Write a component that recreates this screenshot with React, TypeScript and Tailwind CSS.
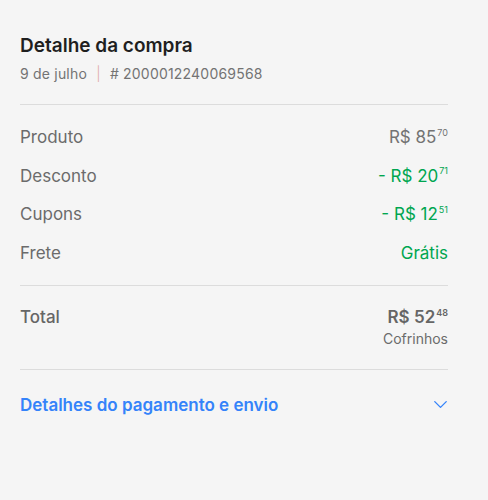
import { ChevronDown } from 'lucide-react';

type Row = { label: string; value: string; cents: string; green?: boolean; plain?: boolean };

const rows: Row[] = [
    { label: 'Produto', value: 'R$ 85', cents: '70' },
    { label: 'Desconto', value: '- R$ 20', cents: '71', green: true },
    { label: 'Cupons', value: '- R$ 12', cents: '51', green: true },
    { label: 'Frete', value: 'Grátis', cents: '', green: true, plain: true },
];

export default function App() {
    return (
        <div className="min-h-[500px] w-[488px] bg-[#f5f5f5] px-5 pt-[34px] font-['Inter',sans-serif] antialiased">
            <div className="w-[428px]">
                {/* Cabeçalho */}
                <h1 className="text-[19px] leading-[24px] font-semibold text-[#1f1f1f]">Detalhe da compra</h1>
                <p className="mt-[8px] text-[14px] leading-[16px] tracking-[0.2px] text-[#737373]">
                    9 de julho <span className="mx-[5px] font-light text-[#e0a8a8]">|</span> # 2000012240069568
                </p>

                <div className="mt-[22px] border-t border-[#dcdcdc]" />

                {/* Resumo */}
                <div className="pt-[21px] pb-[5px]">
                    {rows.map((row) => (
                        <div key={row.label} className="flex h-[38.5px] items-start justify-between pt-[1px] text-[17px] leading-[20px]">
                            <span className="text-[#6b6b6b]">{row.label}</span>
                            <span className={row.green ? 'text-[#00a650]' : 'text-[#737373]'}>
                                {row.value}
                                {!row.plain && <sup className="ml-[1px] text-[9px] top-[-0.8em]">{row.cents}</sup>}
                            </span>
                        </div>
                    ))}
                </div>

                <div className="border-t border-[#dcdcdc]" />

                {/* Total */}
                <div className="flex justify-between pt-[21px] pb-[22px]">
                    <span className="text-[17px] leading-[20px] font-medium text-[#666666]">Total</span>
                    <div className="text-right">
                        <div className="text-[17px] leading-[20px] font-semibold text-[#666666]">
                            R$ 52<sup className="ml-[1px] text-[9px] top-[-0.8em]">48</sup>
                        </div>
                        <div className="mt-[4px] text-[14px] leading-[16px] text-[#6b6b6b]">Cofrinhos</div>
                    </div>
                </div>

                <div className="border-t border-[#dcdcdc]" />

                <button className="flex w-full items-center justify-between pt-[23px] text-left">
                    <span className="text-[17px] leading-[20px] font-semibold text-[#3483fa]">Detalhes do pagamento e envio</span>
                    <ChevronDown className="mr-[-4px] h-[23px] w-[23px] text-[#3483fa]" strokeWidth={1.4} />
                </button>
            </div>
        </div>
    );
}
